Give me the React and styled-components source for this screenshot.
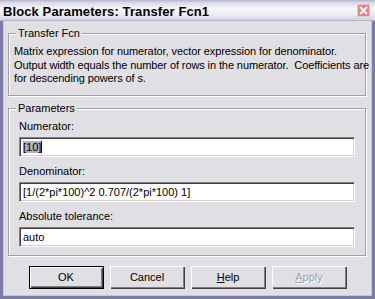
import styled, { createGlobalStyle } from "styled-components";

const Global = createGlobalStyle`
  html, body { margin: 0; padding: 0; background: #e0dfe3; }
  body { font-family: "Liberation Sans", Arial, sans-serif; font-size: 11px; color: #000; }
`;

export default function App() {
  return (
    <>
      <Global />
      <Window>
        <TitleBar>
          <Title>Block Parameters: Transfer Fcn1</Title>
          <Close>
            <svg width="9" height="9" viewBox="0 0 9 9">
              <path d="M1 1 L8 8 M8 1 L1 8" stroke="#fff" strokeWidth="2" />
            </svg>
          </Close>
        </TitleBar>
        <Body>
          <Group $top={12} $pad="11px 0 9px 5px">
            <Legend>Transfer Fcn</Legend>
            <Desc>
              Matrix expression for numerator, vector expression for denominator.
              <br />
              Output width equals the number of rows in the numerator.&nbsp; Coefficients are
              <br />
              for descending powers of s.
            </Desc>
          </Group>
          <Group $top={12} $pad="10px 10px 8px 10px">
            <Legend>Parameters</Legend>
            <Label>Numerator:</Label>
            <Field>
              <Selected>[10]</Selected>
              <Caret />
            </Field>
            <Label $gap>Denominator:</Label>
            <Field>[1/(2*pi*100)^2 0.707/(2*pi*100) 1]</Field>
            <Label $gap>Absolute tolerance:</Label>
            <Field>auto</Field>
          </Group>
          <Buttons>
            <Button $default>OK</Button>
            <Button>Cancel</Button>
            <Button>
              <u>H</u>elp
            </Button>
            <Button $disabled>
              <u>A</u>pply
            </Button>
          </Buttons>
        </Body>
      </Window>
    </>
  );
}

const Window = styled.div`
  width: 375px;
  height: 299px;
  display: flex;
  flex-direction: column;
  background: #e0dfe3;
  overflow: hidden;
`;

const TitleBar = styled.div`
  height: 21px;
  flex: none;
  display: flex;
  align-items: center;
  justify-content: space-between;
  padding: 0 5px 0 3px;
  box-sizing: border-box;
  background: linear-gradient(#b4b4cc 0, #d8d8e6 12%, #f6f6fa 40%, #ececf2 70%, #d2d2e0 95%, #9d9dbd 100%);
`;

const Title = styled.div`
  font-weight: bold;
  font-size: 13px;
  letter-spacing: 0.1px;
  margin-top: 1px;
`;

const Close = styled.div`
  width: 13px;
  height: 13px;
  box-sizing: border-box;
  border: 1px solid #f6c4c4;
  background: #e77f7f;
  display: flex;
  align-items: center;
  justify-content: center;
`;

const Body = styled.div`
  flex: 1;
  display: flex;
  flex-direction: column;
  border-left: 3px solid #7c7ca6;
  border-right: 3px solid #7c7ca6;
  border-bottom: 3px solid #7c7ca6;
  box-shadow: inset 1px 0 0 #c6c6d8, inset -1px 0 0 #c6c6d8, inset 0 -1px 0 #c6c6d8;
  padding: 0 6px 0 5px;
`;

const Group = styled.div`
  position: relative;
  flex: none;
  margin-top: ${(p) => p.$top}px;
  padding: ${(p) => p.$pad};
  border: 1px solid #a0a0a0;
  box-shadow: inset 1px 1px 0 #fff, 1px 1px 0 #fff;
  display: flex;
  flex-direction: column;
`;

const Legend = styled.span`
  position: absolute;
  top: -7px;
  left: 7px;
  padding: 0 2px;
  background: #e0dfe3;
  line-height: 13px;
`;

const Desc = styled.div`
  line-height: 13.5px;
  white-space: nowrap;
  letter-spacing: -0.1px;
`;

const Label = styled.div`
  line-height: 14px;
  margin-top: ${(p) => (p.$gap ? 7 : 0)}px;
  margin-bottom: 4px;
`;

const Field = styled.div`
  height: 20px;
  box-sizing: border-box;
  background: #fff;
  border-top: 1px solid #808080;
  border-left: 1px solid #808080;
  border-bottom: 1px solid #fff;
  border-right: 1px solid #fff;
  box-shadow: inset 1px 1px 0 #404040, inset -1px -1px 0 #d4d0c8;
  padding: 0 3px;
  display: flex;
  align-items: center;
  white-space: nowrap;
`;

const Selected = styled.span`
  background: #b0b0c0;
  line-height: 12px;
`;

const Caret = styled.span`
  width: 1px;
  height: 12px;
  background: #000;
`;

const Buttons = styled.div`
  display: flex;
  justify-content: center;
  gap: 6px;
  margin-top: 10px;
  padding-left: 1px;
`;

const Button = styled.div`
  width: 75px;
  height: 23px;
  box-sizing: border-box;
  display: flex;
  align-items: center;
  justify-content: center;
  background: #e0dfe3;
  border: ${(p) => (p.$default ? "1px solid #000" : "none")};
  box-shadow: inset 1px 1px 0 #fff, inset -1px -1px 0 #404040, inset -2px -2px 0 #808080;
  color: ${(p) => (p.$disabled ? "#a0a0a0" : "#000")};
  text-shadow: ${(p) => (p.$disabled ? "1px 1px 0 #fff" : "none")};
  font-size: 11px;
`;
